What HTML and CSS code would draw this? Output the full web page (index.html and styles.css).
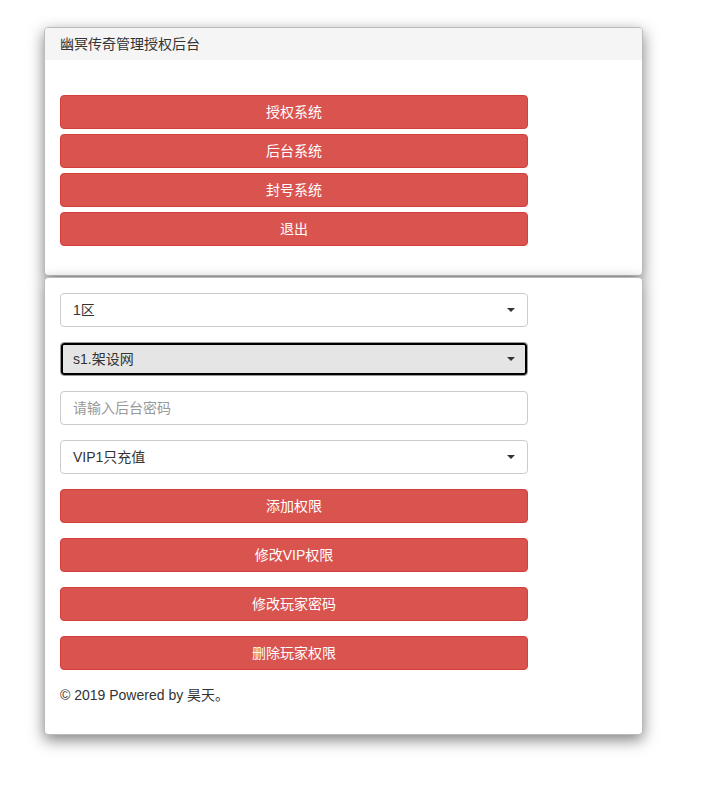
FILE: index.html
```html
<!DOCTYPE html>
<html lang="zh-CN">
<head>
<meta charset="utf-8">
<title>幽冥传奇管理授权后台</title>
<link rel="stylesheet" href="styles.css">
</head>
<body>
<div class="wrap">
  <div class="panel">
    <div class="panel-heading">幽冥传奇管理授权后台</div>
    <div class="panel-body first">
      <div class="btn-list">
        <button class="btn">授权系统</button>
        <button class="btn">后台系统</button>
        <button class="btn">封号系统</button>
        <button class="btn">退出</button>
      </div>
    </div>
  </div>
  <div class="panel second-panel">
    <div class="panel-body second">
      <div class="field select"><span>1区</span></div>
      <div class="field select focused"><span>s1.架设网</span></div>
      <input class="field input" type="text" placeholder="请输入后台密码">
      <div class="field select"><span>VIP1只充值</span></div>
      <button class="btn">添加权限</button>
      <button class="btn">修改VIP权限</button>
      <button class="btn">修改玩家密码</button>
      <button class="btn">删除玩家权限</button>
      <p class="footer">© 2019 Powered by 昊天。</p>
    </div>
  </div>
</div>
</body>
</html>
```
FILE: styles.css
```css
* { box-sizing: border-box; }
html, body { margin: 0; padding: 0; background: #fff; }
body {
  font-family: "Liberation Sans", Arial, "Noto Sans CJK SC", sans-serif;
  font-size: 14px;
  line-height: 20px;
  color: #333;
  min-height: 791px;
}
.wrap {
  width: 599px;
  margin: 27px 0 0 44px;
  padding-bottom: 50px;
}
.panel {
  background: #fff;
  border: 1px solid #bbb;
  border-radius: 4px;
  box-shadow: 0 5px 15px rgba(0, 0, 0, 0.5);
}
.second-panel { margin-top: 1px; }
.panel-heading {
  background: #f5f5f5;
  height: 32px;
  padding: 6px 15px;
  border-radius: 3px 3px 0 0;
  color: #333;
}
.panel-body.first { padding: 35px 15px 29px; }
.panel-body.second { padding: 15px 15px 29px; }
.btn-list { display: flex; flex-direction: column; gap: 5px; width: 468px; }
.btn {
  display: block;
  width: 468px;
  height: 34px;
  margin: 0;
  padding: 6px 12px;
  font: inherit;
  color: #fff;
  background: #d9534f;
  border: 1px solid #d43f3a;
  border-radius: 4px;
  text-align: center;
}
.second .btn, .second .field { margin-bottom: 15px; }
.field {
  display: block;
  width: 468px;
  height: 34px;
  padding: 6px 12px;
  font: inherit;
  color: #333;
  background: #fff;
  border: 1px solid #ccc;
  border-radius: 4px;
}
.input::placeholder { color: #999; }
.input { outline: none; }
.select { position: relative; }
.select::after {
  content: "";
  position: absolute;
  right: 12px;
  top: 14px;
  border-left: 4px solid transparent;
  border-right: 4px solid transparent;
  border-top: 4px solid #333;
}
.select.focused {
  background: #e5e5e5;
  border-color: #999;
  box-shadow: inset 0 0 0 2px #000;
}
.footer { margin: 0; color: #333; }
```
